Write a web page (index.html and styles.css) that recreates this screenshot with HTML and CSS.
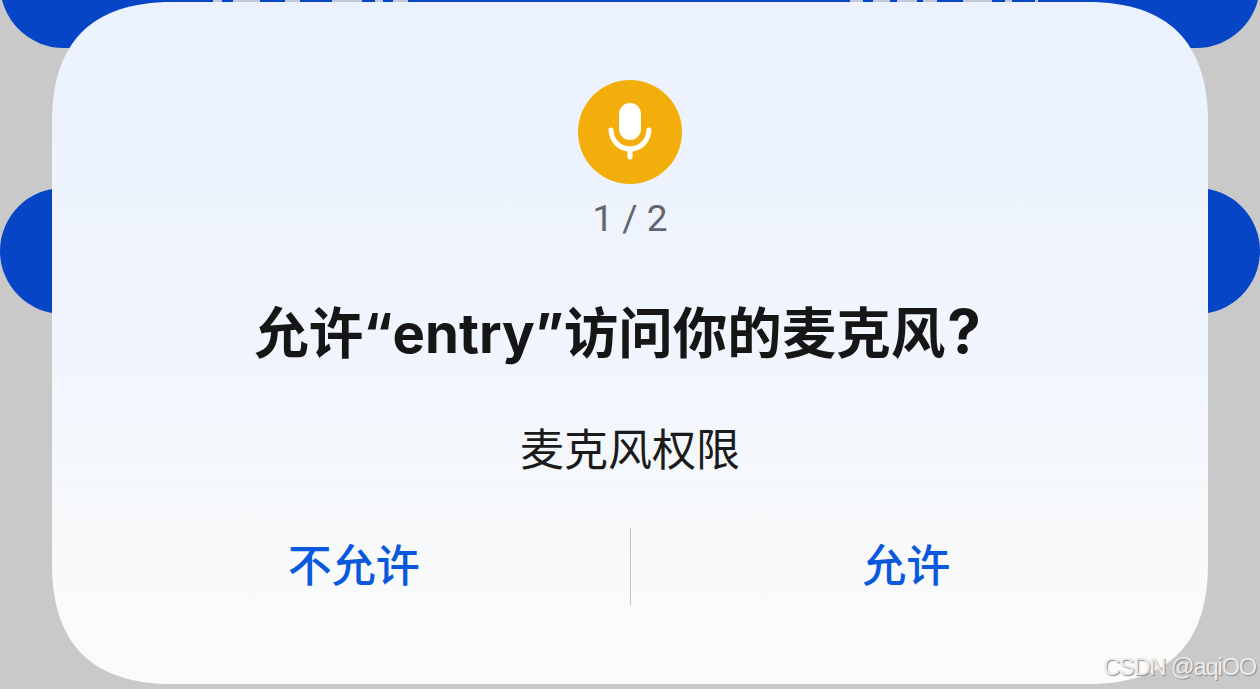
FILE: index.html
```html
<!DOCTYPE html>
<html lang="zh-CN">
<head>
<meta charset="utf-8" />
<title>麦克风权限</title>
<link rel="stylesheet" href="styles.css">
</head>
<body>
<div class="behind">
    <div class="behindTop"></div>
    <div class="topStrip"></div>
    <div class="behindMid"></div>
</div>
<div class="dialog">
    <div class="micIcon">
        <svg width="44" height="58" viewBox="0 0 44 58">
            <rect x="11" y="0" width="22" height="37" rx="11" fill="#fff"/>
            <path d="M3 27 C3.5 38 11.5 46 22 46 C32.5 46 40.5 38 41 27" fill="none" stroke="#fff" stroke-width="5" stroke-linecap="round"/>
            <path d="M22 46 V54" fill="none" stroke="#fff" stroke-width="5" stroke-linecap="round"/>
        </svg>
    </div>
    <div class="stepNum">1 / 2</div>
    <h1 class="title">允许“entry”访问你的麦克风<span class="titleMark">?</span></h1>
    <p class="desc">麦克风权限</p>
    <div class="btnRow">
        <div class="btn">不允许</div>
        <div class="btnLine"></div>
        <div class="btn">允许</div>
    </div>
</div>
<div class="mark">CSDN @aqiOO</div>
</body>
</html>
```
FILE: styles.css
```css
html, body {margin: 0; padding: 0;}
body {width: 1260px; height: 689px; overflow: hidden; background: #c9c9c9; position: relative; font-family: "Inter", "Noto Sans CJK SC", sans-serif;}

/* page under the dialog */
.behind {position: absolute; left: 0; top: 0; width: 1260px; height: 689px;}
.behindTop {position: absolute; left: 0; top: -80px; width: 1260px; height: 128px; background: #0645c6; border-radius: 64px;}
.behindMid {position: absolute; left: 0; top: 188px; width: 1260px; height: 126px; background: #0645c6; border-radius: 63px;}
/* cut off text of the page behind, only its lower edge shows above the dialog */
.topStrip {position: absolute; left: 0; top: 0; width: 1260px; height: 2px; background-repeat: no-repeat;
    background-image: linear-gradient(to right,
        transparent 213px, #c2c9da 213px, #c2c9da 222px, transparent 222px,
        transparent 233px, #c2c9da 233px, #c2c9da 260px, transparent 260px,
        transparent 285px, #c2c9da 285px, #c2c9da 300px, transparent 300px,
        transparent 332px, #c2c9da 332px, #c2c9da 362px, transparent 362px,
        transparent 375px, #c2c9da 375px, #c2c9da 383px, transparent 383px,
        transparent 393px, #c2c9da 393px, #c2c9da 408px, transparent 408px,
        transparent 850px, #c2c9da 850px, #c2c9da 863px, transparent 863px,
        transparent 873px, #c2c9da 873px, #c2c9da 890px, transparent 890px,
        transparent 897px, #c2c9da 897px, #c2c9da 917px, transparent 917px,
        transparent 923px, #c2c9da 923px, #c2c9da 937px, transparent 937px,
        transparent 963px, #c2c9da 963px, #c2c9da 992px, transparent 992px,
        transparent 1005px, #c2c9da 1005px, #c2c9da 1012px, transparent 1012px,
        transparent 1035px, #c2c9da 1035px, #c2c9da 1038px, transparent 1038px);}

/* squircle corners, border-radius alone is too round */
.dialog {position: absolute; left: 52px; top: 2px; width: 1156px; height: 682px; box-sizing: border-box; padding-top: 78px; background: linear-gradient(#ebf2fe 0%, #f0f5fe 50%, #f7f9fb 76%, #f9fafb 86%, #fbfbfb 100%); display: flex; flex-direction: column; align-items: center; text-align: center;
    clip-path: path("M120 0 H1036 C1116 0 1156 40 1156 120 V562 C1156 642 1116 682 1036 682 H120 C40 682 0 642 0 562 V120 C0 40 40 0 120 0 Z");}

.micIcon {width: 104px; height: 104px; border-radius: 50%; background: #f3ae0c; display: flex; align-items: center; justify-content: center;}
.stepNum {margin-top: 12px; font-size: 37px; line-height: 46px; color: #62666d; font-family: "Roboto", sans-serif;}
.title {margin: 53px 0 0; padding-right: 25px; font-size: 54.5px; line-height: 72px; font-weight: 700; color: #161616; white-space: nowrap;}
.titleMark {margin-left: 2px; font-size: 60px;}
.desc {margin: 51px 0 0; font-size: 44px; line-height: 60px; color: #1b1b1b;}

.btnRow {margin-top: 48px; width: 100%; height: 77px; box-sizing: border-box; padding: 0 26px; display: flex; align-items: center;}
.btn {flex: 1; padding-bottom: 2px; font-size: 44px; font-weight: 500; line-height: 60px; color: #0a59dd;}
.btnLine {width: 1px; height: 77px; background: #c3c5c8;}

.mark {position: absolute; right: 4px; bottom: 9px; font-family: "Liberation Sans", sans-serif; font-size: 23.5px; line-height: 26px; letter-spacing: -1.1px; color: #ececec; text-shadow: 1px 1px 1px #8c8c8c;}
```
